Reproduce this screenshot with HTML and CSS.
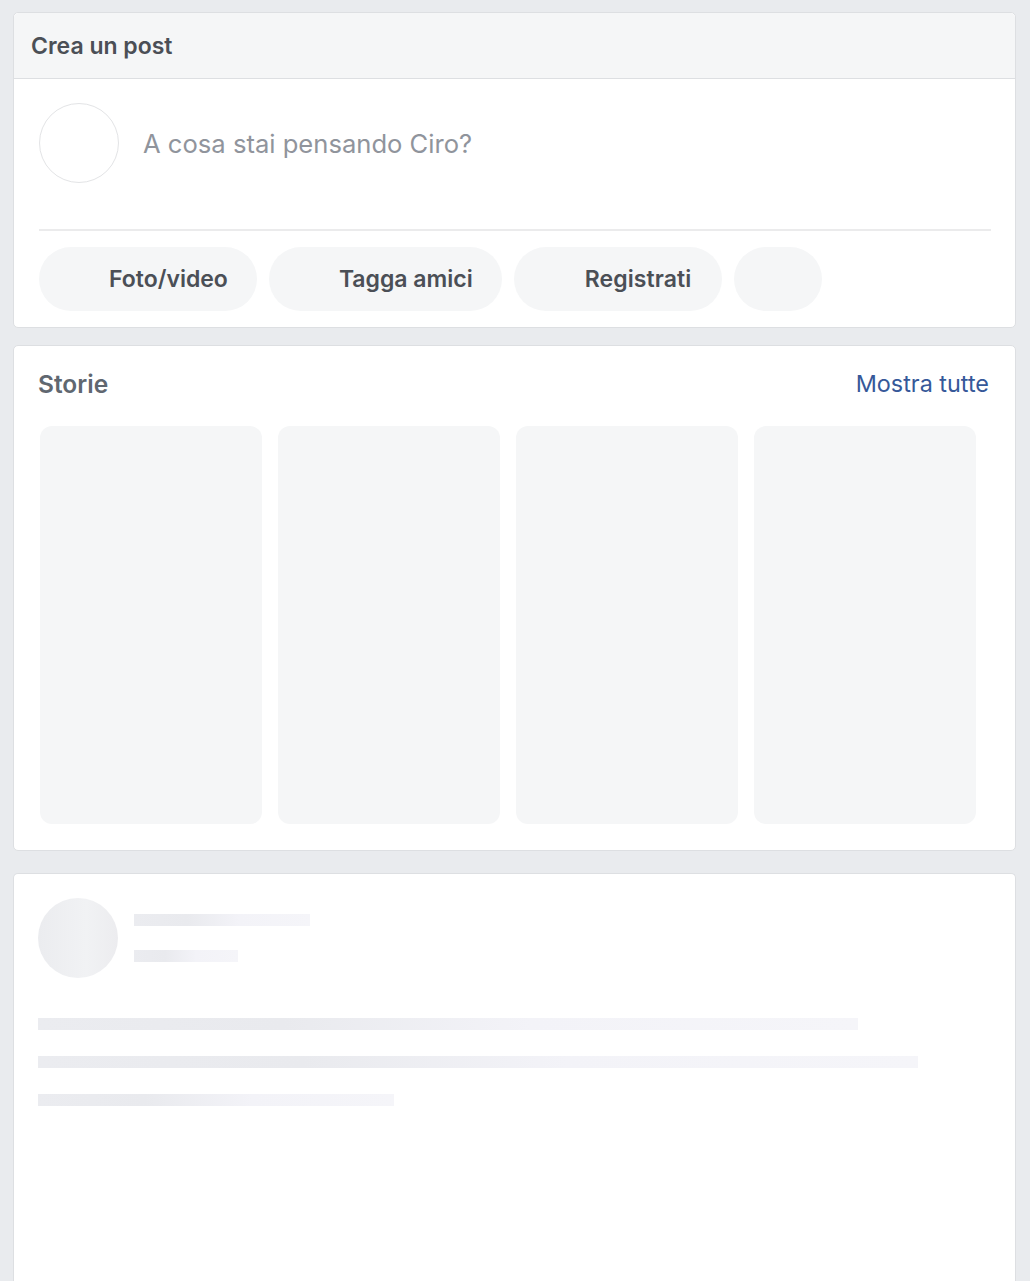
FILE: index.html
```html
<!DOCTYPE html>
<html lang="it">
<head>
<meta charset="utf-8">
<title>Feed</title>
<link rel="stylesheet" href="styles.css">
</head>
<body>
<div class="feed">
  <section class="card composer">
    <header class="composer-head">Crea un post</header>
    <div class="composer-body">
      <div class="composer-input">
        <div class="avatar"></div>
        <div class="placeholder">A cosa stai pensando Ciro?</div>
      </div>
      <div class="divider"></div>
      <div class="actions">
        <button class="pill">Foto/video</button>
        <button class="pill">Tagga amici</button>
        <button class="pill pill-wide">Registrati</button>
        <button class="pill pill-empty"></button>
      </div>
    </div>
  </section>

  <section class="card stories">
    <div class="stories-head">
      <h2 class="stories-title">Storie</h2>
      <a class="stories-link">Mostra tutte</a>
    </div>
    <div class="stories-row">
      <div class="story"></div>
      <div class="story"></div>
      <div class="story"></div>
      <div class="story"></div>
    </div>
  </section>

  <section class="card post">
    <div class="post-head">
      <div class="sk-avatar"></div>
      <div class="post-meta">
        <div class="sk-line sk-name"></div>
        <div class="sk-line sk-date"></div>
      </div>
    </div>
    <div class="post-lines">
      <div class="sk-line" style="width:820px"></div>
      <div class="sk-line" style="width:880px"></div>
      <div class="sk-line" style="width:356px"></div>
    </div>
  </section>
</div>
</body>
</html>
```

FILE: styles.css
```css
* { box-sizing: border-box; }
html, body { margin: 0; padding: 0; }
body {
  background: #e9ebee;
  font-family: Inter, "Helvetica Neue", Arial, sans-serif;
  height: 1281px;
  overflow: hidden;
}
.feed {
  padding: 12px 14px 0 13px;
  display: flex;
  flex-direction: column;
}
.card {
  background: #fff;
  border: 1px solid #dddfe2;
  border-radius: 5px;
}
.composer { height: 316px; }
.stories { margin-top: 17px; }
.post { margin-top: 22px; }
.composer-head {
  background: #f5f6f7;
  border-bottom: 1px solid #dddfe2;
  border-radius: 5px 5px 0 0;
  height: 66px;
  padding: 0 17px;
  display: flex;
  align-items: center;
  font-size: 23px;
  font-weight: 600;
  color: #4b4f56;
}
.composer-body { padding: 24px 24px 0 25px; }
.composer-input {
  display: flex;
  align-items: center;
  gap: 24px;
  height: 80px;
}
.avatar {
  width: 80px;
  height: 80px;
  border-radius: 50%;
  border: 1.5px solid #e3e4e6;
  flex: none;
}
.placeholder {
  font-size: 25.6px;
  color: #90949c;
}
.divider {
  margin-top: 46px;
  height: 2px;
  background: #ebebec;
}
.actions {
  display: flex;
  gap: 12px;
  margin-top: 16px;
}
.pill {
  height: 64px;
  border: none;
  border-radius: 32px;
  background: #f5f6f7;
  padding: 0 29px 0 70px;
  font-family: inherit;
  font-size: 23px;
  font-weight: 600;
  color: #4b4f56;
}
.pill-wide { padding: 0 31px 0 71px; letter-spacing: 0.1px; }
.pill-empty { width: 88px; padding: 0; }

.stories { height: 506px; padding: 0 26px 0 24px; }
.stories-head {
  display: flex;
  justify-content: space-between;
  align-items: center;
  height: 75px;
}
.stories-title {
  margin: 0;
  font-size: 24.5px;
  font-weight: 600;
  color: #606770;
}
.stories-link {
  font-size: 23.4px;
  color: #365899;
}
.stories-row {
  display: flex;
  gap: 16px;
  margin-top: 5px;
  padding-left: 2px;
}
.story {
  width: 222px;
  height: 398px;
  border-radius: 12px;
  background: #f5f6f7;
}

.post {
  height: 430px;
  border-bottom: none;
  border-radius: 5px 5px 0 0;
  padding: 24px 24px 0 24px;
}
.post-head {
  display: flex;
  gap: 16px;
}
.sk-avatar {
  width: 80px;
  height: 80px;
  border-radius: 50%;
  background: linear-gradient(90deg, #ebecef, #f1f2f4 60%, #ececef);
  flex: none;
}
.post-meta {
  padding-top: 16px;
  display: flex;
  flex-direction: column;
  gap: 24px;
}
.sk-line {
  height: 12px;
  background: linear-gradient(90deg, #ebecf0 0%, #e9eaee 30%, #f3f3f8 60%, #f5f5f9 100%);
}
.sk-name { width: 176px; }
.sk-date { width: 104px; }
.post-lines {
  margin-top: 40px;
  display: flex;
  flex-direction: column;
  gap: 26px;
}
```
